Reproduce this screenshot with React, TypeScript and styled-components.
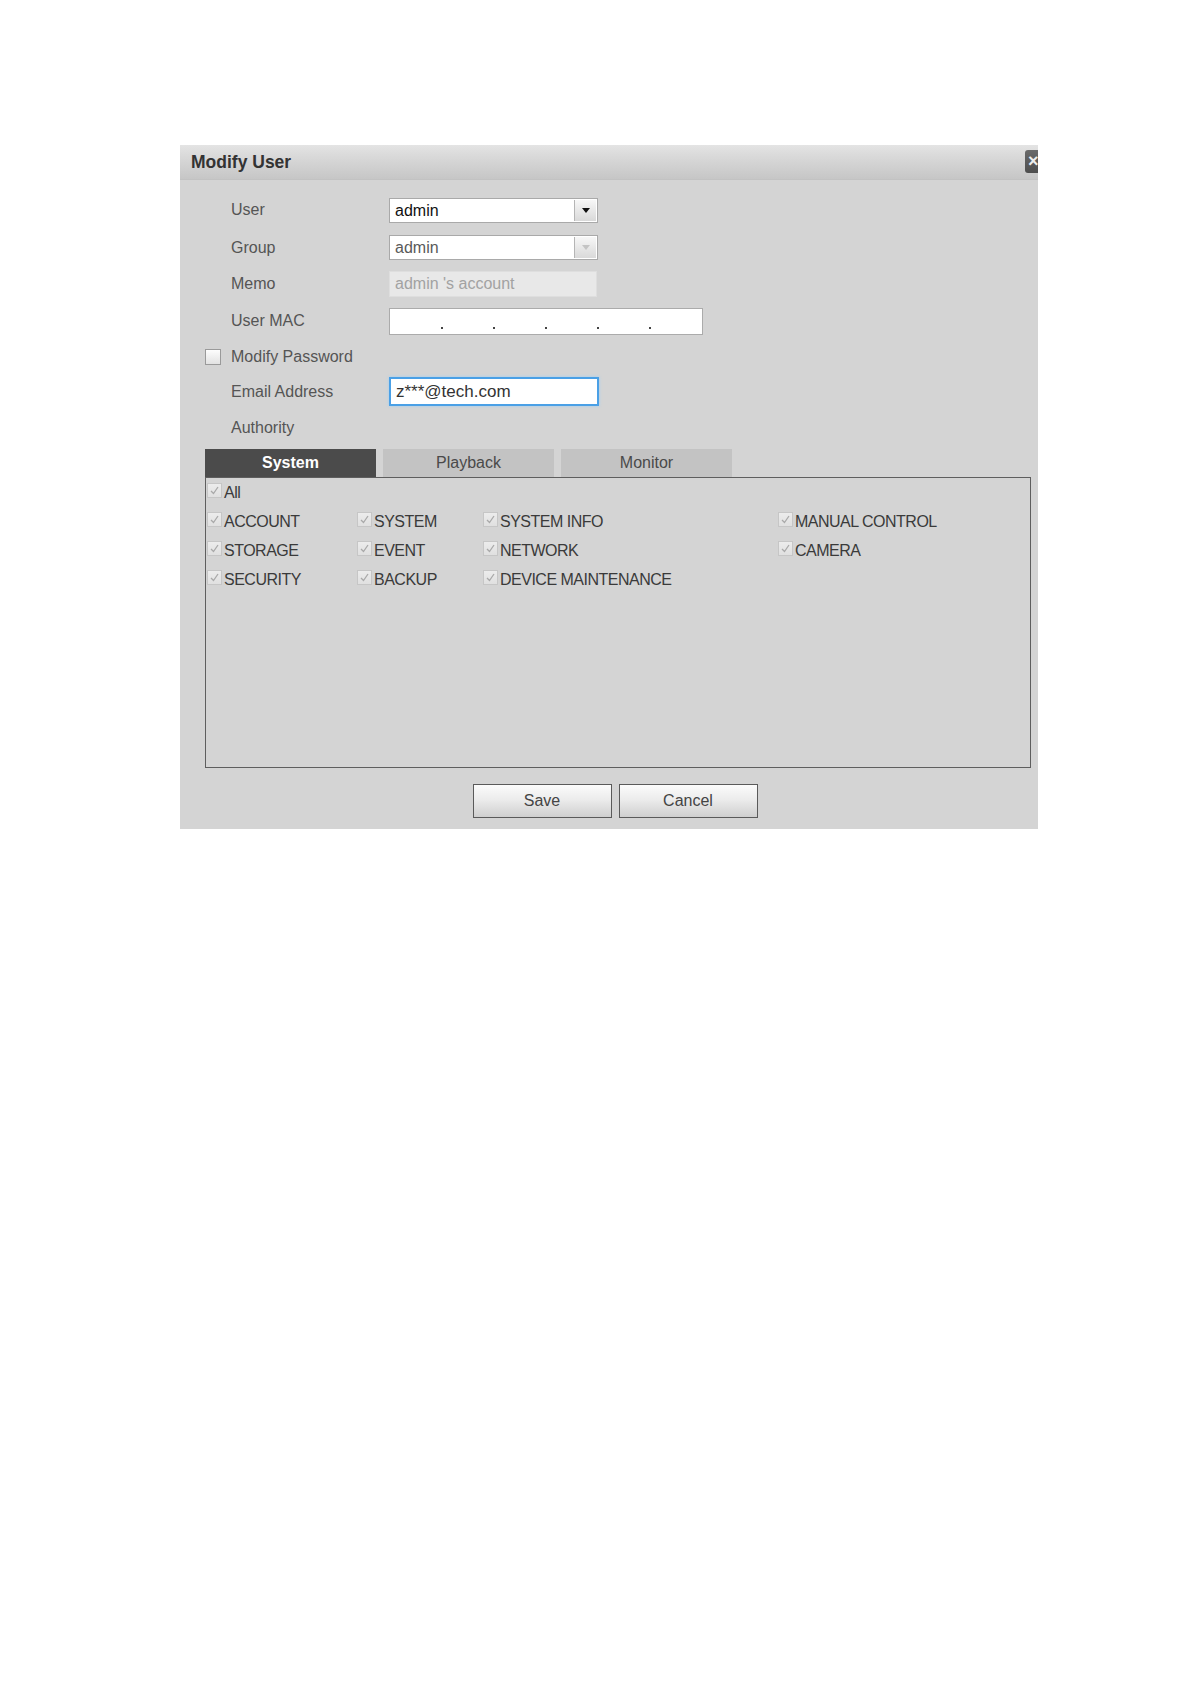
import React from 'react'
import styled, { createGlobalStyle } from 'styled-components'

const GlobalStyle = createGlobalStyle`
  html, body {
    margin: 0;
    padding: 0;
    background: #ffffff;
  }
  body {
    font-family: "Liberation Sans", Arial, sans-serif;
  }
`

const Page = styled.div`
  width: 1191px;
  min-height: 1684px;
  padding: 145px 0 0 180px;
  box-sizing: border-box;
`

const Dialog = styled.section`
  position: relative;
  width: 858px;
  height: 684px;
  background: #d4d4d4;
  overflow: hidden;
  display: flex;
  flex-direction: column;
`

const TitleBar = styled.header`
  height: 35px;
  flex: none;
  display: flex;
  align-items: center;
  padding-left: 11px;
  background: linear-gradient(#e4e4e4 0%, #dadada 30%, #c6c6c6 100%);
  border-bottom: 1px solid #c2c2c2;
  box-sizing: border-box;
`

const Title = styled.h2`
  margin: 0;
  font-size: 17.5px;
  font-weight: bold;
  color: #333;
`

const CloseButton = styled.div`
  position: absolute;
  top: 5px;
  left: 845px;
  width: 24px;
  height: 23px;
  border-radius: 3px;
  background: linear-gradient(#6a6a6a, #4e4e4e);
  color: #eee;
  font-weight: bold;
  font-size: 18px;
  line-height: 22px;
  padding-left: 3px;
  box-sizing: border-box;
`

const Form = styled.div`
  padding-top: 11px;
  display: flex;
  flex-direction: column;
`

const Row = styled.div<{ $h?: number }>`
  height: ${({ $h }) => $h ?? 36}px;
  display: grid;
  grid-template-columns: 25px 26px 158px auto;
  align-items: center;
`

const Label = styled.span`
  grid-column: 3;
  font-size: 16px;
  color: #555;
`

const Field = styled.div`
  grid-column: 4;
`

const SmallCheck = styled.span`
  grid-column: 2;
  width: 16px;
  height: 16px;
  border: 1px solid #9a9a9a;
  background: linear-gradient(#fdfdfd, #e2e2e2);
  box-sizing: border-box;
`

const SelectBox = styled.div<{ $disabled?: boolean }>`
  width: 209px;
  height: 25px;
  display: flex;
  border: 1px solid #a9a9a9;
  background: #fff;
  box-sizing: border-box;
  color: ${({ $disabled }) => ($disabled ? '#5a5a5a' : '#111')};
  font-size: 16px;
`

const SelectText = styled.span`
  flex: 1;
  padding-left: 5px;
  line-height: 23px;
`

const SelectArrow = styled.span<{ $disabled?: boolean }>`
  width: 21px;
  border-left: 1px solid #b5b5b5;
  background: linear-gradient(#f7f7f7, #d9d9d9);
  display: flex;
  align-items: center;
  justify-content: center;
  margin: 1px;
  &::after {
    content: '';
    border-left: 4px solid transparent;
    border-right: 4px solid transparent;
    border-top: 5px solid ${({ $disabled }) => ($disabled ? '#c4c4c4' : '#111')};
  }
`

const TextBox = styled.div<{ $w: number; $h: number; $tone: 'plain' | 'disabled' | 'focus' }>`
  width: ${({ $w }) => $w}px;
  height: ${({ $h }) => $h}px;
  box-sizing: border-box;
  padding-left: 5px;
  display: flex;
  align-items: center;
  font-size: ${({ $tone }) => ($tone === 'focus' ? 17 : 16)}px;
  color: ${({ $tone }) => ($tone === 'disabled' ? '#a2a2a2' : '#333')};
  background: ${({ $tone }) => ($tone === 'disabled' ? '#e8e8e8' : '#fff')};
  border: ${({ $tone }) =>
    $tone === 'focus' ? '2px solid #4aa0e6' : $tone === 'disabled' ? '1px solid #dedede' : '1px solid #aaa'};
  box-shadow: ${({ $tone }) => ($tone === 'focus' ? '0 0 3px #9fd0f5' : 'none')};
`

const MacBox = styled.div`
  width: 314px;
  height: 27px;
  box-sizing: border-box;
  border: 1px solid #ababab;
  background: #fff;
  display: grid;
  grid-template-columns: repeat(6, 1fr);
`

const MacCell = styled.span`
  position: relative;
  &:not(:last-child)::after {
    content: '';
    position: absolute;
    right: -1px;
    top: 18px;
    width: 2px;
    height: 2px;
    background: #444;
  }
`

const Authority = styled.div`
  margin-top: 3px;
  padding: 0 7px 0 25px;
  display: flex;
  flex-direction: column;
`

const Tabs = styled.div`
  display: flex;
  gap: 7px;
`

const Tab = styled.div<{ $active?: boolean }>`
  width: 171px;
  height: 28px;
  display: flex;
  align-items: center;
  justify-content: center;
  font-size: 16px;
  font-weight: ${({ $active }) => ($active ? 'bold' : 'normal')};
  color: ${({ $active }) => ($active ? '#fff' : '#4a4a4a')};
  background: ${({ $active }) => ($active ? '#4b4b4b' : '#c3c3c3')};
`

const PermBox = styled.div`
  height: 291px;
  box-sizing: border-box;
  border: 1px solid #5e5e5e;
  padding-left: 1px;
  display: grid;
  grid-template-columns: 150px 126px 295px 1fr;
  grid-auto-rows: 29px;
  align-content: start;
`

const Perm = styled.label<{ $col?: number }>`
  grid-column: ${({ $col }) => $col ?? 'auto'};
  display: flex;
  align-items: center;
  font-size: 16px;
  letter-spacing: -0.5px;
  color: #3a3a3a;
  white-space: nowrap;
`

const PermCheck = styled.span`
  width: 15px;
  height: 15px;
  margin-right: 2px;
  margin-top: -4px;
  box-sizing: border-box;
  border: 1px solid #c6c6c6;
  background: linear-gradient(#ececec, #e0e0e0);
  display: flex;
  align-items: center;
  justify-content: center;
`

const Footer = styled.div`
  margin-top: 16px;
  padding: 0 7px 0 19px;
  display: flex;
  justify-content: center;
  gap: 7px;
`

const Button = styled.button`
  width: 139px;
  height: 34px;
  border: 1px solid #5a5a5a;
  background: linear-gradient(#fbfbfb 0%, #ececec 45%, #cfcfcf 100%);
  font-family: "Liberation Sans", Arial, sans-serif;
  font-size: 16px;
  color: #444;
  padding: 0;
`

const Tick = () => (
  <svg width="11" height="11" viewBox="0 0 11 11">
    <path d="M2 6 L4.5 8.5 L9 2" fill="none" stroke="#a9a9a9" strokeWidth="1.3" />
  </svg>
)

const Item: React.FC<{ text: string; col?: number }> = ({ text, col }) => (
  <Perm $col={col}>
    <PermCheck>
      <Tick />
    </PermCheck>
    {text}
  </Perm>
)

const App: React.FC = () => {
  return (
    <>
      <GlobalStyle />
      <Page>
        <Dialog>
          <TitleBar>
            <Title>Modify User</Title>
          </TitleBar>
          <CloseButton>×</CloseButton>
          <Form>
            <Row $h={38}>
              <Label>User</Label>
              <Field>
                <SelectBox>
                  <SelectText>admin</SelectText>
                  <SelectArrow />
                </SelectBox>
              </Field>
            </Row>
            <Row $h={37}>
              <Label>Group</Label>
              <Field>
                <SelectBox $disabled>
                  <SelectText>admin</SelectText>
                  <SelectArrow $disabled />
                </SelectBox>
              </Field>
            </Row>
            <Row $h={36}>
              <Label>Memo</Label>
              <Field>
                <TextBox $w={208} $h={26} $tone="disabled">admin 's account</TextBox>
              </Field>
            </Row>
            <Row $h={38}>
              <Label>User MAC</Label>
              <Field>
                <MacBox>
                  {[0, 1, 2, 3, 4, 5].map((i) => (
                    <MacCell key={i} />
                  ))}
                </MacBox>
              </Field>
            </Row>
            <Row $h={34}>
              <SmallCheck />
              <Label>Modify Password</Label>
            </Row>
            <Row $h={35}>
              <Label>Email Address</Label>
              <Field>
                <TextBox $w={210} $h={29} $tone="focus">z***@tech.com</TextBox>
              </Field>
            </Row>
            <Row $h={37}>
              <Label>Authority</Label>
            </Row>
          </Form>
          <Authority>
            <Tabs>
              <Tab $active>System</Tab>
              <Tab>Playback</Tab>
              <Tab>Monitor</Tab>
            </Tabs>
            <PermBox>
              <Item text="All" col={1} />
              <Item text="ACCOUNT" col={1} />
              <Item text="SYSTEM" />
              <Item text="SYSTEM INFO" />
              <Item text="MANUAL CONTROL" />
              <Item text="STORAGE" />
              <Item text="EVENT" />
              <Item text="NETWORK" />
              <Item text="CAMERA" />
              <Item text="SECURITY" />
              <Item text="BACKUP" />
              <Item text="DEVICE MAINTENANCE" />
            </PermBox>
          </Authority>
          <Footer>
            <Button>Save</Button>
            <Button>Cancel</Button>
          </Footer>
        </Dialog>
      </Page>
    </>
  )
}

export default App
